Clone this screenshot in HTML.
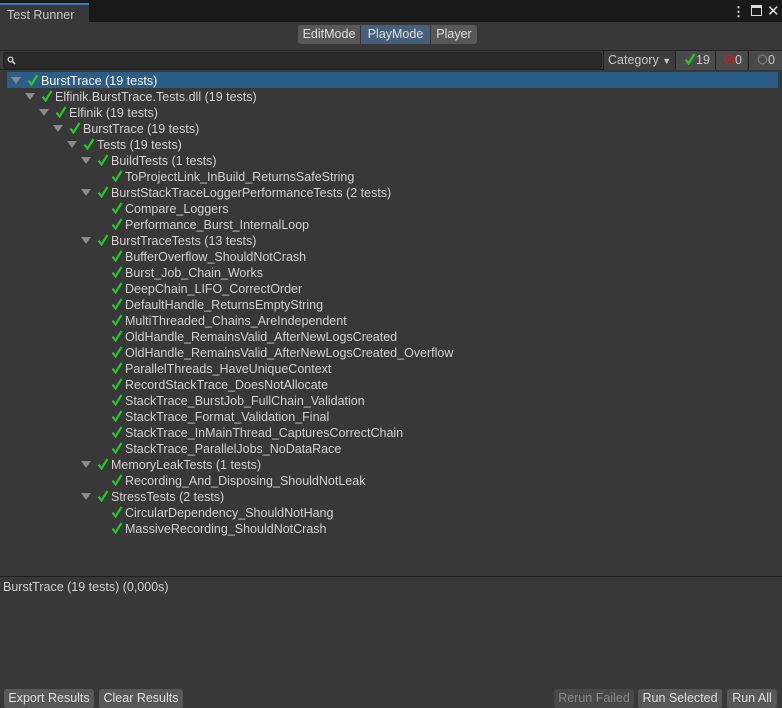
<!DOCTYPE html>
<html><head><meta charset="utf-8"><style>
*{box-sizing:border-box;margin:0;padding:0}
body{width:782px;height:708px;background:#383838;font-family:"Liberation Sans",sans-serif;font-size:12.5px;color:#d2d2d2;position:relative;overflow:hidden}
.a{position:absolute;white-space:nowrap}
.btn{position:absolute;background:#585858;border-radius:3px;color:#e0e0e0;text-align:center;line-height:19px;height:19px;font-size:12.5px}
.row{position:absolute;left:0;width:778px;height:16px;line-height:16px}
.tri{position:absolute;top:5px;width:0;height:0;border-left:5px solid transparent;border-right:5px solid transparent;border-top:7px solid #8a8a8a}
.ck{position:absolute;top:1px}
.tx{position:absolute;top:1px;white-space:nowrap}
</style></head><body>
<div class="a" style="left:0;top:0;width:782px;height:22px;background:#191919"></div>
<div class="a" style="left:0;top:3px;width:89px;height:19px;background:#383838;border-top:2px solid #3a79bb;padding:3px 0 0 7px;color:#c8c8c8">Test Runner</div>
<div class="a" style="left:732px;top:4px;color:#ddd;font-size:13px;font-weight:bold">&#8942;</div>
<div class="a" style="left:751px;top:5px;width:11px;height:11px;border:1.5px solid #ddd;border-top-width:3px"></div>
<div class="a" style="left:767px;top:2px;color:#ddd;font-size:15px">✕</div>
<div class="btn" style="left:298px;top:25px;width:62px;border-radius:3px 0 0 3px">EditMode</div>
<div class="btn" style="left:361px;top:25px;width:69px;background:#46607c;border-radius:0">PlayMode</div>
<div class="btn" style="left:431px;top:25px;width:46px;border-radius:0 3px 3px 0">Player</div>
<div class="a" style="left:0;top:50px;width:782px;height:20px;background:#3c3c3c;border-top:1px solid #232323;border-bottom:1px solid #232323"></div>
<div class="a" style="left:3px;top:52px;width:599px;height:17px;background:#2a2a2a;border:1px solid #212121;border-radius:3px"></div>
<svg class="a" style="left:7px;top:56px" width="9" height="9" viewBox="0 0 9 9"><circle cx="3.5" cy="3.5" r="2.3" stroke="#ccc" stroke-width="1.4" fill="none"/><path d="M5 5 L8 8" stroke="#ccc" stroke-width="1.6"/></svg>
<div class="a" style="left:603px;top:51px;width:72px;height:19px;background:#3c3c3c;border-left:1px solid #232323;padding:2px 0 0 4px;color:#c8c8c8">Category <span style="font-size:9px">&#9660;</span></div>
<div class="a" style="left:675px;top:51px;width:40px;height:19px;background:#4a4a4a;border-left:1px solid #232323;padding:2px 0 0 8px;color:#c8c8c8"><svg width="12" height="12" viewBox="0 0 12 12" style="vertical-align:-1px"><path d="M1.5 6.5 L4.5 10.5 L10.5 1" stroke="#22cc22" stroke-width="2.2" fill="none"/></svg>19</div>
<div class="a" style="left:715px;top:51px;width:32px;height:19px;background:#4a4a4a;border-left:1px solid #232323;padding:2px 0 0 8px;color:#c8c8c8"><svg width="11" height="11" viewBox="0 0 11 11" style="vertical-align:-1px"><circle cx="5.5" cy="5.5" r="4.3" stroke="#d01818" stroke-width="1.5" fill="none"/><path d="M2.5 8.5 L8.5 2.5" stroke="#d01818" stroke-width="1.5"/></svg>0</div>
<div class="a" style="left:748px;top:51px;width:34px;height:19px;background:#4a4a4a;border-left:1px solid #232323;padding:2px 0 0 8px;color:#c8c8c8"><svg width="11" height="11" viewBox="0 0 11 11" style="vertical-align:-1px"><circle cx="5.5" cy="5.5" r="4.3" stroke="#777" stroke-width="1.3" fill="none"/></svg>0</div>
<div class="a" style="left:0;top:576px;width:782px;height:1px;background:#1e1e1e"></div>
<div class="a" style="left:3px;top:580px;color:#d2d2d2">BurstTrace (19 tests) (0,000s)</div>
<div class="btn" style="left:4px;top:689px;width:90px">Export Results</div>
<div class="btn" style="left:99px;top:689px;width:84px">Clear Results</div>
<div class="btn" style="left:554px;top:689px;width:80px;color:#8a8a8a;background:#484848">Rerun Failed</div>
<div class="btn" style="left:638px;top:689px;width:84px">Run Selected</div>
<div class="btn" style="left:727px;top:689px;width:50px">Run All</div>
<div id="t"></div>
<script>
var d=[[0,"BurstTrace (19 tests)",1],[1,"Elfinik.BurstTrace.Tests.dll (19 tests)",1],[2,"Elfinik (19 tests)",1],[3,"BurstTrace (19 tests)",1],[4,"Tests (19 tests)",1],[5,"BuildTests (1 tests)",1],[6,"ToProjectLink_InBuild_ReturnsSafeString",0],[5,"BurstStackTraceLoggerPerformanceTests (2 tests)",1],[6,"Compare_Loggers",0],[6,"Performance_Burst_InternalLoop",0],[5,"BurstTraceTests (13 tests)",1],[6,"BufferOverflow_ShouldNotCrash",0],[6,"Burst_Job_Chain_Works",0],[6,"DeepChain_LIFO_CorrectOrder",0],[6,"DefaultHandle_ReturnsEmptyString",0],[6,"MultiThreaded_Chains_AreIndependent",0],[6,"OldHandle_RemainsValid_AfterNewLogsCreated",0],[6,"OldHandle_RemainsValid_AfterNewLogsCreated_Overflow",0],[6,"ParallelThreads_HaveUniqueContext",0],[6,"RecordStackTrace_DoesNotAllocate",0],[6,"StackTrace_BurstJob_FullChain_Validation",0],[6,"StackTrace_Format_Validation_Final",0],[6,"StackTrace_InMainThread_CapturesCorrectChain",0],[6,"StackTrace_ParallelJobs_NoDataRace",0],[5,"MemoryLeakTests (1 tests)",1],[6,"Recording_And_Disposing_ShouldNotLeak",0],[5,"StressTests (2 tests)",1],[6,"CircularDependency_ShouldNotHang",0],[6,"MassiveRecording_ShouldNotCrash",0]];
var h="";
d.forEach(function(r,i){var x=41+14*r[0];var y=72+16*i;
h+='<div class="row" style="top:'+y+'px;'+(i==0?'background:#2c5d87;left:7px;width:771px;':'')+'">';
var o=i==0?7:0;
if(r[2])h+='<div class="tri" style="left:'+(x-30-o)+'px"></div>';
h+='<svg class="ck" style="left:'+(x-14-o)+'px" width="12" height="13" viewBox="0 0 12 13"><path d="M1.5 7.5 L4.5 11.5 L10.5 2" stroke="#22cc22" stroke-width="2.2" fill="none"/></svg>';
h+='<div class="tx" style="left:'+(x-o)+'px;'+(i==0?'color:#fff':'')+'">'+r[1]+'</div></div>';});
document.getElementById("t").innerHTML=h;
</script>
</body></html>
